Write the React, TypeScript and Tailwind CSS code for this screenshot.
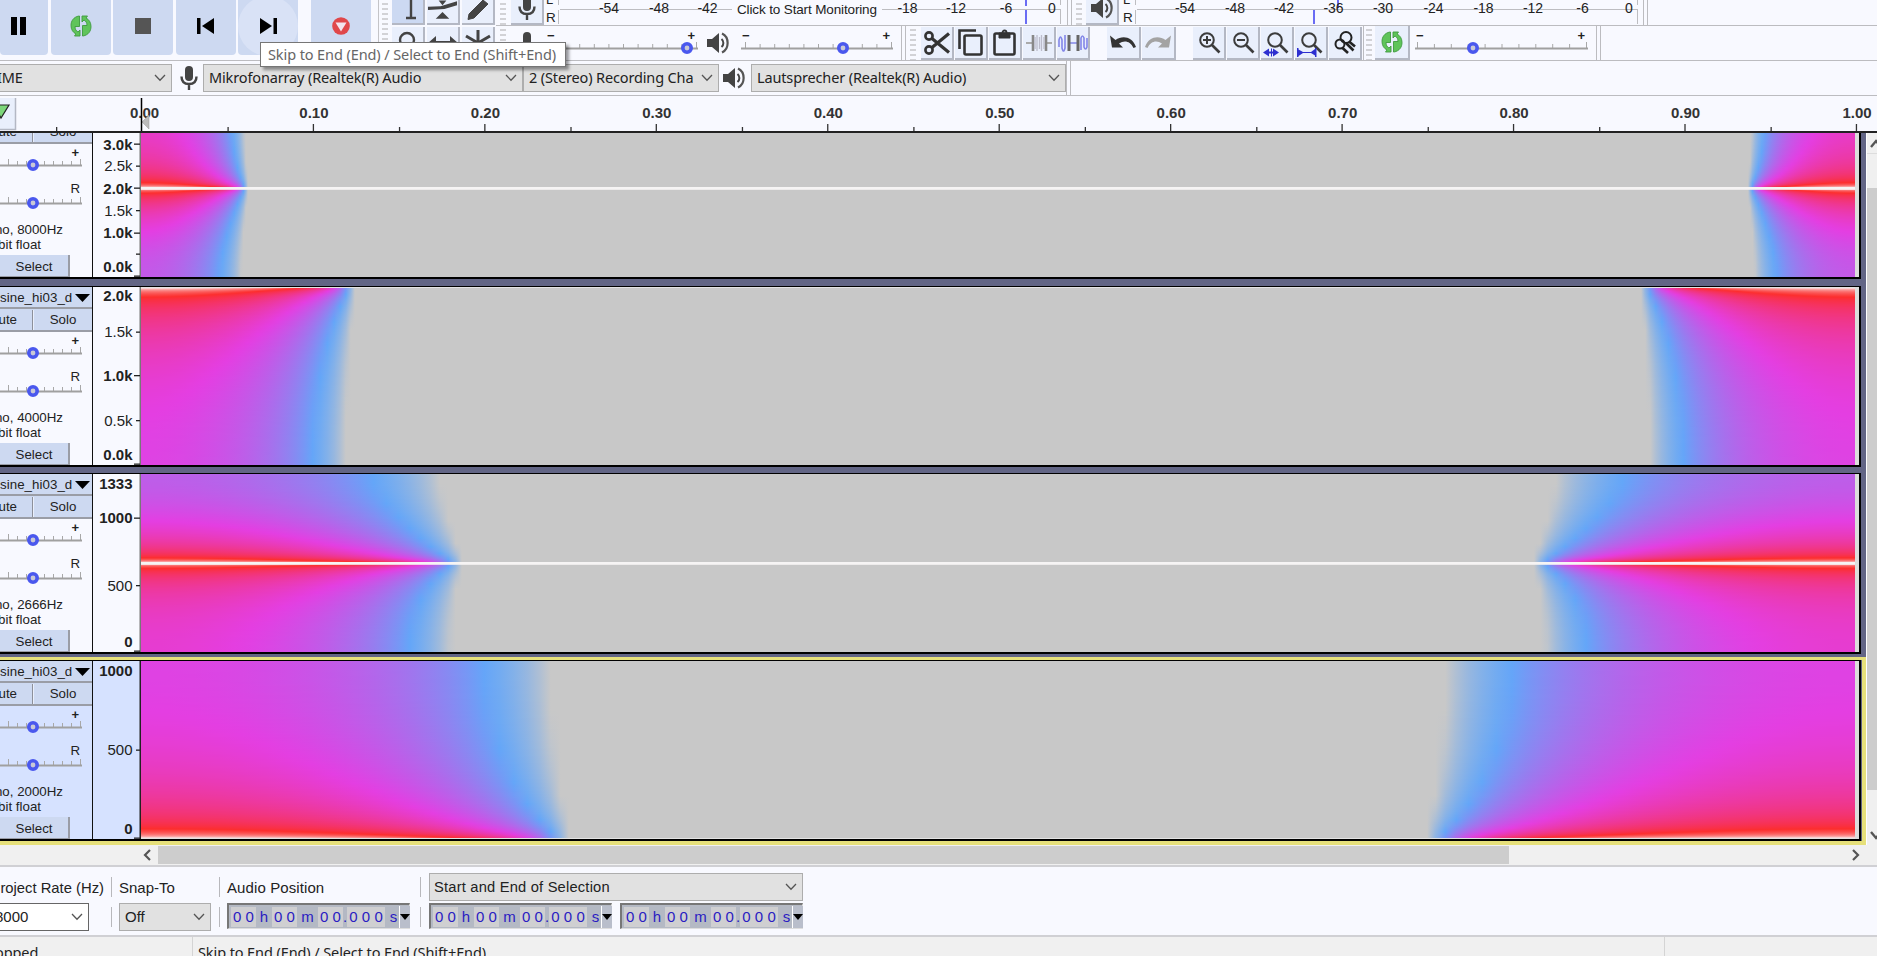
import React from "react";

/* ---------- spectrogram ---------- */

const PALETTE = [
  [200, 200, 200],
  [100, 166, 248],
  [228, 62, 226],
  [252, 46, 46],
  [248, 244, 244],
];

function levelColor(level: number) {
  const v = Math.max(0, Math.min(3.999, level));
  const i = Math.floor(v);
  const f = v - i;
  const c = PALETTE[i].map((a, k) => Math.round(a + (PALETTE[i + 1][k] - a) * f));
  return `rgb(${c[0]},${c[1]},${c[2]})`;
}

type Tone = "nyquist" | "dc" | "midHigh" | "midLow";

const HALF_WINDOW = 512;
const TIME_SCALE = 1710;
const STOPS = Array.from({ length: 26 }, (_, i) => 1 - Math.pow(1 - i / 25, 1.5));

/* Leakage of a sine that is cut off at a distance u (0..1) from the window's centre. */
function leakLevel(tone: Tone, w: number, u: number) {
  let s: number;
  if (tone === "nyquist") s = 1 / (2 * Math.abs(Math.cos(w / 2)) + 1e-6);
  else if (tone === "dc") s = 1 / (2 * Math.abs(Math.sin(w / 2)) + 1e-6);
  else {
    const n = tone === "midHigh" ? 1.1 - 0.72 * Math.cos(w) : 1.1 + 0.8 * Math.cos(w);
    s = Math.sqrt(n) / (2 * Math.abs(Math.cos(w)) + 1e-6);
  }
  const win = 0.5 * (1 + Math.cos(Math.PI * u)) + 1e-9;
  const area = HALF_WINDOW * 0.35 * (1 - u - Math.sin(Math.PI * u) / Math.PI) + 1e-9;
  const mag = 1 / Math.hypot(1 / (win * s), 1 / area);
  return 2.26 + Math.log10(mag);
}

function Spectrogram({ id, rate, tone, rows }: { id: string; rate: number; tone: Tone; rows: number }) {
  const full = 178;
  const reach = (HALF_WINDOW / rate) * TIME_SCALE;
  const first = full - rows;
  const mid = tone === "midHigh" || tone === "midLow";
  const list = Array.from({ length: rows }, (_, r) => r);
  const line = full / 2 - first;
  return (
    <svg width={1714} height={rows} viewBox={`0 0 1714 ${rows}`} className="block shrink-0" shapeRendering="crispEdges">
      <rect width={1714} height={rows} fill="#c8c8c8" />
      <defs>
        {list.map((r) => {
          const w = Math.PI * (1 - (r + first + 0.5) / full);
          return (
            <linearGradient key={r} id={`${id}-${r}`}>
              {STOPS.map((u) => (
                <stop key={u} offset={u} stopColor={levelColor(leakLevel(tone, w, u))} />
              ))}
            </linearGradient>
          );
        })}
        <g id={`${id}-side`}>
          {list.map((r) => (
            <rect key={r} y={r} width={reach} height={1} fill={`url(#${id}-${r})`} />
          ))}
        </g>
      </defs>
      <use href={`#${id}-side`} />
      <use href={`#${id}-side`} transform="translate(1714 0) scale(-1 1)" />
      {mid && <rect y={line - 1} width={1714} height={2} fill="#f6f4f4" />}
      {mid && <rect y={line + 1} width={1714} height={1} fill="#f6f4f4" opacity={0.8} />}
      {tone === "nyquist" && <rect width={1714} height={1} fill="#e4e4e4" />}
      {tone === "dc" && <rect y={rows - 1} width={1714} height={1} fill="#e4e4e4" />}
    </svg>
  );
}

/* ---------- small drawings ---------- */

function Mic({ className = "" }) {
  return (
    <svg width={20} height={26} viewBox="0 0 20 26" className={className}>
      <rect x={6} y={1} width={8} height={15} rx={4} fill="#444" />
      <path d="M2.5 11.5c0 5 3 7.5 7.5 7.5s7.5-2.500 7.500-7.500M10 19v6" fill="none" stroke="#444" strokeWidth={2.400} />
    </svg>
  );
}

function Speaker({ className = "" }) {
  return (
    <svg width={24} height={24} viewBox="0 0 24 24" className={className}>
      <path d="M1 8h5l7-6v20l-7-6H1z" fill="#444" />
      <path d="M15.500 8c2.500 2 2.500 6 0 8" fill="none" stroke="#444" strokeWidth={2} />
      <path d="M16 2.500c7.500 3.500 7.500 15.500 0 19" fill="none" stroke="#555" strokeWidth={2.200} />
    </svg>
  );
}

function Loop() {
  return (
    <svg width={22} height={22} viewBox="0 0 22 22">
      <path d="M9 1C3.500 2 1 6 1 10.500c0 4 2 7 5 8.500l-1.500 2H10v-6l-2 2c-2-1-3-3-3-5.500h4.500V1z" fill="#5fc45a" stroke="#3e9a3e" strokeWidth={0.900} />
      <path d="M13 21c5.500-1 8-5 8-9.500 0-4-2-7-5-8.500l1.500-2H12v6l2-2c2 1 3 3 3 5.500h-4.500V21z" fill="#5fc45a" stroke="#3e9a3e" strokeWidth={0.900} />
    </svg>
  );
}

function Chevron({ className = "" }) {
  return (
    <svg width={12} height={8} viewBox="0 0 12 8" className={className}>
      <path d="M1 1l5 5.200L11 1" fill="none" stroke="#555" strokeWidth={1.300} />
    </svg>
  );
}

function Grip({ className = "" }) {
  return (
    <div className={"flex h-full w-[6px] shrink-0 flex-col justify-start gap-[3px] overflow-hidden pt-[3px] " + className}>
      {Array.from({ length: 12 }, (_, i) => (
        <div key={i} className="h-[2px] w-full shrink-0 bg-[#d2d2d6]" />
      ))}
    </div>
  );
}

function Bars() {
  return <div className="h-full w-[5px] shrink-0 border-x border-[#bcbcc0]" />;
}

function Btn({ children, w = 33, down = false }: { children?: React.ReactNode; w?: number; down?: boolean }) {
  return (
    <div
      className={
        "flex h-full shrink-0 items-center justify-center overflow-hidden border-r-2 border-b-2 border-[#b4b8c4] " +
        (down ? "bg-[#ccd9f2]" : "bg-[#e9effc]")
      }
      style={{ width: w }}
    >
      {children}
    </div>
  );
}

function Slider({ w, knob, step = 14.6, track = "#a0a0a0" }: { w: number; knob: number; step?: number; track?: string }) {
  const n = Math.floor((w - 3) / step + 0.01);
  return (
    <svg width={w} height={14} viewBox={`0 0 ${w} 14`} className="block overflow-visible">
      {Array.from({ length: n + 1 }, (_, i) => {
        const edge = i === 0 || i === n;
        return <rect key={i} x={w - 2 - i * step} y={edge ? 1 : 3} width={1} height={edge ? 6 : 4} fill="#a8a8a8" />;
      })}
      <rect y={6.500} width={w} height={2} fill={track} />
      <circle cx={knob} cy={7} r={4.200} fill="#c9c9d6" stroke="#4a58ee" strokeWidth={3.600} />
    </svg>
  );
}

function VolumeSlider({ w, knob, step }: { w: number; knob: number; step: number }) {
  return (
    <div className="flex h-full shrink-0 flex-col pt-[3px]" style={{ width: w }}>
      <div className="flex h-[12px] justify-between px-px pr-[3px] font-['Liberation_Sans',sans-serif] text-[13px] leading-[14px] font-bold text-[#222]">
        <span>−</span>
        <span>+</span>
      </div>
      <Slider w={w} knob={knob} step={step} />
    </div>
  );
}

function Meter({ w, labels, peaks, note }: { w: number; labels: [string, number][]; peaks: [number, number, number][]; note?: boolean }) {
  return (
    <svg width={w} height={25} viewBox={`0 0 ${w} 25`} className="block shrink-0 font-['Liberation_Sans',sans-serif]">
      <text x={0} y={3.500} fontSize={13} fill="#222">L</text>
      <text x={0} y={21.500} fontSize={13.500} fill="#222">R</text>
      <path d={`M12.500 0v5M12.500 10v14M14 9.500h${w - 16}M${w - 2.500} 0v5M${w - 2.500} 10v14`} stroke="#bdbdc1" fill="none" />
      {peaks.map(([x, y, h]) => (
        <rect key={`${x}-${y}`} x={x} y={y} width={2} height={h} fill="#6a6cf4" />
      ))}
      {labels.map(([t, x]) => (
        <text key={t} x={x} y={12.500} fontSize={14} textAnchor="middle" fill="#222">{t}</text>
      ))}
      {note && <rect x={186} y={0} width={150} height={24} fill="#f8f9ff" />}
      {note && <text x={191} y={14} fontSize={13.500} textLength={140} fill="#222">Click to Start Monitoring</text>}
    </svg>
  );
}

function Select({ children, w, pad = "pl-[5px]", cls = "" }: { children: React.ReactNode; w: number; pad?: string; cls?: string }) {
  return (
    <div className={`flex shrink-0 items-center overflow-hidden border border-[#adadad] bg-[#e1e1e1] ${pad} ${cls}`} style={{ width: w }}>
      <span className="min-w-0 flex-1 overflow-hidden whitespace-nowrap">{children}</span>
      <Chevron className="mr-[5px] ml-2 shrink-0" />
    </div>
  );
}

/* ---------- top toolbars ---------- */

function Transport() {
  const btn = "flex h-[55px] shrink-0 items-center justify-center rounded-b-[4px] bg-[#cdd9f1] pb-[4px]";
  return (
    <div className="flex h-[60px] w-[379px] shrink-0 border-r border-[#c4c4c8]">
      <div className={btn + " w-[48px] pr-[12px]"}>
        <svg width={15} height={18} viewBox="0 0 15 18"><path d="M0 0h6v18H0zM9 0h6v18H9z" /></svg>
      </div>
      <div className={btn + " ml-[3px] w-[60px]"}><Loop /></div>
      <div className={btn + " ml-[2px] w-[60px]"}><div className="h-4 w-4 bg-[#555]" /></div>
      <div className={btn + " ml-[3px] w-[60px] pr-[2px]"}>
        <svg width={17} height={16} viewBox="0 0 17 16"><path d="M0 0h3.500v16H0zM17 0v16L5 8z" /></svg>
      </div>
      <div className={btn + " ml-[2px] w-[60px] overflow-hidden"}>
        <div className="flex h-[60px] w-[60px] shrink-0 items-center justify-center rounded-full bg-[#d9e2f6]">
          <svg width={17} height={16} viewBox="0 0 17 16"><path d="M17 0h-3.500v16H17zM0 0v16l12-8z" /></svg>
        </div>
      </div>
      <div className={btn + " ml-[13px] w-[60px]"}>
        <svg width={18} height={18} viewBox="0 0 18 18">
          <circle cx={9} cy={9} r={8.800} fill="#e0474a" />
          <path d="M3.500 5.500h11L9 14.500z" fill="#f3e4ee" />
        </svg>
      </div>
    </div>
  );
}

function Lens({ sign, extra }: { sign?: React.ReactNode; extra?: React.ReactNode }) {
  return (
    <svg width={28} height={28} viewBox="0 0 28 28">
      <circle cx={12} cy={11} r={6.800} fill="none" stroke="#3c3c3c" strokeWidth={2} />
      <path d="M17 16l7.500 7.500" stroke="#3c3c3c" strokeWidth={2.600} />
      {sign}
      {extra}
    </svg>
  );
}

function TopBars() {
  return (
    <div className="box-content flex h-[60px] border-b border-[#bcbcc0]">
      <Transport />
      <div className="flex min-w-0 flex-1">
        <div className="flex w-[117px] shrink-0 pl-[3px]">
          <Grip className="mr-[4px]" />
          <div className="flex flex-col gap-[2px]">
            <div className="flex h-[25px] gap-[2px]">
              <Btn down>
                <svg width={14} height={24} viewBox="0 0 14 24" className="translate-x-[3px]"><path d="M2 18h10M7 0v18" stroke="#444" strokeWidth={2.400} /></svg>
              </Btn>
              <Btn>
                <svg width={32} height={24} viewBox="0 0 32 24"><path d="M1 6.500l13-.5 17-5v4L18 9l-17 1z" fill="#444" /><path d="M16 12l7 7H9zM12 0h8l-4 5z" fill="#444" /></svg>
              </Btn>
              <Btn>
                <svg width={28} height={24} viewBox="0 0 28 24"><path d="M5 14L19 0l5 4-14 14-6 1.500z" fill="#444" stroke="#444" /></svg>
              </Btn>
            </div>
            <div className="flex h-[33px] gap-[2px]">
              <Btn><svg width={26} height={28} viewBox="0 0 26 28"><circle cx={12} cy={11} r={7} fill="none" stroke="#444" strokeWidth={2.400} /><path d="M17 17l7 8" stroke="#444" strokeWidth={3} /></svg></Btn>
              <Btn><svg width={30} height={20} viewBox="0 0 30 20"><path d="M0 10l8-7v5h14V3l8 7-8 7v-5H8v5z" fill="#444" /></svg></Btn>
              <Btn><svg width={28} height={28} viewBox="0 0 28 28"><path d="M14 1v26M2 7l24 14M26 7L2 21" stroke="#444" strokeWidth={3} /></svg></Btn>
            </div>
          </div>
        </div>
        <div className="flex min-w-0 flex-1 flex-col">
          {/* meters */}
          <div className="flex h-[26px] border-b border-[#bcbcc0]">
            <Grip className="mr-[5px] ml-[4px]" />
            <Btn><Mic className="-translate-y-[4px]" /></Btn>
            <div className="ml-[2px] flex">
              <Meter
                w={517}
                note
                labels={[["-54", 63], ["-48", 113], ["-42", 161.5], ["-18", 361.5], ["-12", 410], ["-6", 460], ["0", 506]]}
                peaks={[[479, 0, 6], [479, 10, 14]]}
              />
            </div>
            <div className="ml-[4px] flex"><Bars /></div>
            <Grip className="mr-[4px] ml-[4px]" />
            <Btn><Speaker className="-translate-y-[4px]" /></Btn>
            <div className="ml-[4px] flex">
              <Meter
                w={517}
                labels={[["-54", 62], ["-48", 112], ["-42", 161], ["-36", 210.500], ["-30", 260], ["-24", 310.500], ["-18", 360.500], ["-12", 410], ["-6", 459.500], ["0", 506]]}
                peaks={[[190, 10, 14], [214, 0, 8]]}
              />
            </div>
            <div className="ml-[3px] flex"><Bars /></div>
          </div>
          {/* mixer, edit, play speed */}
          <div className="flex h-[34px]">
            <Grip className="mr-[11px] ml-[4px]" />
            <Mic className="mt-[5px] shrink-0" />
            <div className="ml-[9px] flex"><VolumeSlider w={152} knob={141} step={14.600} /></div>
            <Speaker className="mt-[5px] ml-[8px] shrink-0" />
            <div className="ml-[11px] flex"><VolumeSlider w={152} knob={102} step={14.600} /></div>
            <div className="ml-[8px] flex"><Bars /></div>
            <Grip className="mr-[5px] ml-[4px]" />
            <div className="flex gap-px pt-px">
              <Btn>
                <svg width={28} height={28} viewBox="0 0 28 28" fill="none" stroke="#333">
                  <circle cx={6} cy={7} r={3.600} strokeWidth={2.600} /><circle cx={6} cy={21} r={3.600} strokeWidth={2.600} />
                  <path d="M9 9.500l17 14M9 18.500l17-14" strokeWidth={3.200} />
                </svg>
              </Btn>
              <Btn>
                <svg width={28} height={28} viewBox="0 0 28 28" fill="none" stroke="#333" strokeWidth={2.600}>
                  <rect x={7.500} y={6.500} width={17} height={19} rx={1.500} /><path d="M2.500 20V1.500H19" />
                </svg>
              </Btn>
              <Btn>
                <svg width={28} height={28} viewBox="0 0 28 28" fill="none" stroke="#333" strokeWidth={2.600}>
                  <rect x={3.500} y={4.500} width={20} height={21} rx={1.500} /><path d="M8 4h11v5H8z" fill="#333" strokeWidth={1} /><circle cx={13.500} cy={3.500} r={2} strokeWidth={1.800} />
                </svg>
              </Btn>
              <Btn>
                <svg width={28} height={22} viewBox="0 0 28 22" fill="none">
                  <path d="M1 11h6M22 11h5" stroke="#aaa" strokeWidth={2} /><path d="M8 3v16M21 3v16" stroke="#888" strokeWidth={2.600} />
                  <path d="M10 5v12M12 3v16M14.500 5v12M16.500 3v16M19 5v12" stroke="#bcbccb" strokeWidth={1.300} />
                </svg>
              </Btn>
              <Btn>
                <svg width={30} height={22} viewBox="0 0 30 22" fill="none">
                  <path d="M1 15V8q1.500-6 3 0v8q1.500 6 3 0V3M23 18V6q1.500-4 3 0v9q1.500 4 3 0V6M12 11h9" stroke="#8286e8" strokeWidth={1.600} />
                  <path d="M11 3v16M20 3v16" stroke="#666" strokeWidth={3} />
                </svg>
              </Btn>
            </div>
            <div className="ml-[17px] flex gap-px pt-px">
              <Btn w={34}>
                <svg width={28} height={18} viewBox="0 0 28 18"><path d="M1 1.500l2 12h11L10 9.500c5-3.500 11-3 14.500 4.500l2.500-1C23 2 13 1.500 6.500 6z" fill="#333" /></svg>
              </Btn>
              <Btn w={34}>
                <svg width={28} height={18} viewBox="0 0 28 18"><path d="M27 1.500l-2 12H14l4-4C13 6 7 6.500 3.500 14L1 13C5 2 15 1.500 21.500 6z" fill="#a3a3a3" /></svg>
              </Btn>
            </div>
            <div className="ml-[17px] flex gap-px pt-px">
              <Btn><Lens sign={<path d="M8 11h8M12 7v8" stroke="#3c3c3c" strokeWidth={2} />} /></Btn>
              <Btn><Lens sign={<path d="M8 11h8" stroke="#3c3c3c" strokeWidth={2} />} /></Btn>
              <Btn><Lens extra={<path d="M0 23.500l6-4v3h2v-3l1 0v3h1v-3l6 4-6 4v-3H9v3H8v-3H6v3z" fill="#2d2fd0" />} /></Btn>
              <Btn><Lens extra={<path d="M0 19h1.500v1.500L6 23h8l4-3V19h1.500v9H18v-1.500L14 24H6l-4.500 3V28H0z" fill="#2d2fd0" />} /></Btn>
              <Btn>
                <svg width={28} height={28} viewBox="0 0 28 28" fill="none" stroke="#222" strokeWidth={2}>
                  <circle cx={15} cy={8.500} r={5.500} /><circle cx={9} cy={15} r={4.500} /><path d="M18 12.500l6 5M11 18.500l6 5.500M15 14l7.500 7.500" strokeWidth={2.600} />
                </svg>
              </Btn>
            </div>
            <div className="mr-[2px] ml-px w-px bg-[#bcbcc0]" />
            <Grip className="mr-[3px]" />
            <Btn w={35}><Loop /></Btn>
            <div className="ml-[5px] flex"><VolumeSlider w={173} knob={58} step={16.900} /></div>
            <div className="ml-[8px] flex"><Bars /></div>
          </div>
        </div>
      </div>
    </div>
  );
}

function DeviceBar() {
  return (
    <div className="flex h-[35px] items-center border-b border-[#bcbcc0] font-['Noto_Sans',sans-serif] text-[14.500px] tracking-[-0.140px] text-[#222]">
      <Select w={173} pad="pl-0" cls="h-[28px] -ml-px"><span className="-ml-[3px]">IME</span></Select>
      <Mic className="mr-[4px] ml-[7px] shrink-0" />
      <Select w={320} cls="h-[28px]">Mikrofonarray (Realtek(R) Audio</Select>
      <Select w={196} cls="h-[28px]">2 (Stereo) Recording Channels</Select>
      <Speaker className="mr-[5px] ml-[3px] shrink-0" />
      <Select w={315} cls="h-[28px]">Lautsprecher (Realtek(R) Audio)</Select>
      <div className="h-[34px]"><Bars /></div>
    </div>
  );
}

function TimeRuler() {
  const marks = Array.from({ length: 11 }, (_, i) => i);
  return (
    <div className="flex h-[37px] border-b-2 border-[#222]">
      <svg width={1877} height={35} viewBox="0 0 1877 35" className="block font-['Liberation_Sans',sans-serif]">
        <path d="M0 2h15v31H0z" fill="#e9effc" />
        <path d="M15.500 2v31.500H0" fill="none" stroke="#b4b8c4" strokeWidth={1.500} />
        <path d="M-6 9h15L1 22z" fill="#7cd67a" stroke="#222" strokeWidth={1.200} />
        {marks.map((i) => (
          <g key={i} fill="#333">
            {i > 0 && <rect x={141.300 + i * 171.450} y={28} width={1.300} height={7} />}
            <rect x={56 + i * 171.450} y={31} width={1.300} height={4} />
            <text x={(i ? 142.500 : 144.500) + i * 171.450} y={22} fontSize={15} fontWeight={700} textAnchor="middle">{(i / 10).toFixed(2)}</text>
          </g>
        ))}
        <path d="M149 19v14l-7-7z" fill="#bbb" stroke="#999" strokeWidth={0.500} />
        <path d="M141.500 2v33" stroke="#000" strokeWidth={1.500} />
      </svg>
    </div>
  );
}

/* ---------- tracks ---------- */

type Tick = [string, number, number, boolean];

interface TrackData {
  id: string;
  rate: number;
  tone: Tone;
  rows: number;
  ticks: Tick[];
  selected?: boolean;
}

/* label, label centre, tick position, bold */
const TRACKS: TrackData[] = [
  {
    id: "a", rate: 8000, tone: "midHigh", rows: 144,
    ticks: [["3.0k", 11.500, 11, true], ["2.5k", 33, 33, false], ["2.0k", 55.500, 55, true], ["1.5k", 78, 77.500, false], ["1.0k", 100, 100, true], ["", 0, 121, false], ["0.0k", 134, 143, true]],
  },
  {
    id: "b", rate: 4000, tone: "nyquist", rows: 178,
    ticks: [["2.0k", 9, -5, true], ["1.5k", 45, 45, false], ["1.0k", 88.500, 88.500, true], ["0.5k", 133.500, 133.500, false], ["0.0k", 168, 177, true]],
  },
  {
    id: "c", rate: 2666, tone: "midLow", rows: 178,
    ticks: [["1333", 9.500, -5, true], ["1000", 44, 44, true], ["500", 111.500, 111.500, false], ["0", 168, 177, true]],
  },
  {
    id: "d", rate: 2000, tone: "dc", rows: 178, selected: true,
    ticks: [["1000", 9.500, -5, true], ["500", 89, 89, false], ["0", 168, 177, true]],
  },
];

function TrackPanel({ rate, clipped, selected }: { rate: number; clipped?: boolean; selected?: boolean }) {
  return (
    <div
      className={
        "flex h-full w-[93px] shrink-0 flex-col overflow-hidden border-r border-[#111] font-['Liberation_Sans',sans-serif] text-[13.300px] text-[#222] " +
        (clipped ? "justify-end " : "") +
        (selected ? "bg-[#d6e2ff]" : "bg-[#f8f9ff]")
      }
    >
      <div className="flex h-[178px] shrink-0 flex-col">
        <div className="flex h-[22px] shrink-0 items-center justify-between border-b-2 border-[#9a9da6] bg-[#cdd9f1] pt-[2px] pr-[1px]">
          <span className="tracking-[0.050px]">sine_hi03_d</span>
          <svg width={15} height={8} viewBox="0 0 15 8" className="mr-px"><path d="M0 0h15L7.500 8z" /></svg>
        </div>
        <div className="flex h-[23px] shrink-0 border-b-2 border-[#9a9da6] bg-[#cdd9f1] pt-px">
          <div className="flex w-[33px] items-center justify-end border-r border-[#8d909a] pr-[15px]"><span>Mute</span></div>
          <div className="flex flex-1 items-center justify-center border-l border-[#e9effc]">Solo</div>
        </div>
        <div className="flex h-[14px] shrink-0 items-end justify-end pr-[13px] text-[13px] leading-[10px] font-bold">+</div>
        <div className="h-[14px] shrink-0"><Slider w={82} knob={33} step={9} /></div>
        <div className="flex h-[24px] shrink-0 items-end justify-end pr-[12px] leading-[14px]">R</div>
        <div className="h-[14px] shrink-0"><Slider w={82} knob={33} step={9} /></div>
        <div className="mt-[12px] flex w-[63px] shrink-0 justify-end leading-[15px] whitespace-nowrap">Mono, {rate}Hz</div>
        <div className="flex w-[41px] shrink-0 justify-end leading-[15px] whitespace-nowrap">32-bit float</div>
        <div className="mt-auto flex h-[22px] w-[70px] shrink-0 items-center justify-center border-r-2 border-b border-[#9a9da6] bg-[#cdd9f1] pt-[2px]">Select</div>
      </div>
    </div>
  );
}

function FrequencyRuler({ ticks, rows, selected }: { ticks: Tick[]; rows: number; selected?: boolean }) {
  return (
    <svg width={48} height={rows} viewBox={`0 0 48 ${rows}`} className={"block shrink-0 font-['Liberation_Sans',sans-serif] " + (selected ? "bg-[#d6e2ff]" : "bg-[#f8f9ff]")}>
      <rect x={46.500} width={1.500} height={rows} fill={selected ? "#222" : "#777"} />
      {ticks.map(([label, cy, ty, bold], i) => (
        <g key={i} fill="#222">
          <rect x={bold ? 41 : 43} y={ty - 0.500} width={bold ? 6 : 4} height={1.300} />
          <text x={39.500} y={cy + 5} fontSize={15} fontWeight={bold ? 700 : 400} textAnchor="end">{label}</text>
        </g>
      ))}
    </svg>
  );
}

function TrackRow({ t }: { t: TrackData }) {
  const clipped = t.rows < 178;
  return (
    <div className={"w-[1861px] border-black " + (clipped ? "border-b-2" : "border-t border-b-2")}>
      <div className="flex w-[1861px] border-r-[2px] border-black" style={{ height: t.rows }}>
        <TrackPanel rate={t.rate} clipped={clipped} selected={t.selected} />
        <FrequencyRuler ticks={t.ticks} rows={t.rows} selected={t.selected} />
        <Spectrogram id={t.id} rate={t.rate} tone={t.tone} rows={t.rows} />
        <div className="h-full min-w-0 flex-1 bg-[#dcdedc]" />
      </div>
    </div>
  );
}

function Tracks() {
  return (
    <div className="flex h-[713px]">
      <div className="flex w-[1866px] shrink-0 flex-col bg-[#626585]">
        <TrackRow t={TRACKS[0]} />
        <div className="h-[7px] shrink-0" />
        <TrackRow t={TRACKS[1]} />
        <div className="h-[6px] shrink-0" />
        <TrackRow t={TRACKS[2]} />
        <div className="h-[3px] shrink-0" />
        <div className="flex flex-1 flex-col border-t-[3px] border-r-[4px] border-b-[4px] border-[#e6e07a]">
          <TrackRow t={TRACKS[3]} />
        </div>
      </div>
      <div className="flex flex-1 flex-col overflow-hidden border-l border-white bg-[#f0f0f0]">
        <svg width={14} height={20} viewBox="0 0 14 20" className="shrink-0"><path d="M4 14l5-6 5 6" fill="none" stroke="#555" strokeWidth={2.400} /></svg>
        <div className="h-px shrink-0 bg-[#ddd]" />
        <div className="mt-[34px] h-[602px] shrink-0 bg-[#cdcdcd]" />
        <svg width={14} height={54} viewBox="0 0 14 54" className="shrink-0"><path d="M4 42l5 6 5-6" fill="none" stroke="#555" strokeWidth={2.400} /></svg>
      </div>
    </div>
  );
}

/* ---------- bottom ---------- */

const GROUPS: [string[], string][] = [
  [["0", "0"], "w-[25px] bg-[#cfcfd1]"],
  [["h"], "w-[16px]"],
  [["0", "0"], "w-[25px] bg-[#cfcfd1]"],
  [["m"], "w-[21px]"],
  [["0", "0"], "w-[25px] bg-[#cfcfd1]"],
  [["."], "w-[4px]"],
  [["0", "0", "0"], "w-[38px] bg-[#cfcfd1]"],
  [["s"], "w-[14px] pl-[3px]"],
];

function TimeField() {
  return (
    <div className="flex h-[26px] w-[183px] shrink-0 items-center border-t-2 border-r border-b border-l-2 border-t-[#777] border-r-[#ddd] border-b-[#ddd] border-l-[#777] bg-[#b4b9c4] pl-[2px] font-['Liberation_Sans',sans-serif] text-[15px] text-[#2a1cc2]">
      {GROUPS.map(([chars, cls], i) => (
        <div key={i} className={"flex h-[20px] shrink-0 items-center justify-around leading-none " + cls}>
          {chars.map((c, k) => (
            <span key={k}>{c}</span>
          ))}
        </div>
      ))}
      <div className="flex h-[22px] flex-1 items-center justify-center border-l border-white bg-[#b9becb]">
        <svg width={10} height={6} viewBox="0 0 10 6" className="shrink-0"><path d="M0 0h10L5 6z" /></svg>
      </div>
    </div>
  );
}

function Divider({ className = "" }) {
  return (
    <div className={"flex w-px shrink-0 flex-col gap-[10px] " + className}>
      <div className="h-[20px] bg-[#b8b8bc]" />
      <div className="h-[20px] bg-[#b8b8bc]" />
    </div>
  );
}

function SelectionBar() {
  return (
    <div className="flex h-[72px] shrink-0 border-y-2 border-[#d0d0d4] pt-[6px] font-['Liberation_Sans',sans-serif] text-[15px] text-[#222]">
      <div className="flex w-[111px] shrink-0 flex-col overflow-hidden">
        <div className="flex h-[30px] w-[104px] items-center justify-end text-[14.800px] whitespace-nowrap">Project Rate (Hz)</div>
        <div className="flex h-[28px] w-[89px] items-center justify-between border border-l-0 border-[#666] bg-white pr-[5px]">
          <span className="-ml-[5px]">8000</span>
          <Chevron />
        </div>
      </div>
      <Divider className="mt-[4px]" />
      <div className="ml-[7px] flex w-[100px] shrink-0 flex-col">
        <div className="flex h-[30px] items-center">Snap-To</div>
        <Select w={92} cls="h-[28px]">Off</Select>
      </div>
      <Divider className="mt-[4px]" />
      <div className="ml-[7px] flex w-[193px] shrink-0 flex-col">
        <div className="flex h-[30px] items-center tracking-[0.100px]">Audio Position</div>
        <TimeField />
      </div>
      <Divider className="mt-[4px]" />
      <div className="ml-[8px] flex flex-col">
        <Select w={374} pad="pl-[4px]" cls="h-[28px] mb-[2px] text-[14.700px] tracking-[0.200px]">Start and End of Selection</Select>
        <div className="flex gap-[8px]">
          <TimeField />
          <TimeField />
        </div>
      </div>
    </div>
  );
}

export default function App() {
  return (
    <div className="relative flex h-[956px] w-[1877px] flex-col overflow-hidden bg-[#f8f9ff]">
      <TopBars />
      <DeviceBar />
      <TimeRuler />
      <Tracks />
      <div className="flex h-[20px] shrink-0 items-center bg-[#f0f0f0]">
        <svg width={10} height={14} viewBox="0 0 10 14" className="ml-[142px] shrink-0"><path d="M8 2L3 7l5 5" fill="none" stroke="#555" strokeWidth={2.200} /></svg>
        <div className="ml-[6px] h-[18px] w-[1351px] shrink-0 bg-[#cdcdcd]" />
        <svg width={10} height={14} viewBox="0 0 10 14" className="ml-[342px] shrink-0"><path d="M2 2l5 5-5 5" fill="none" stroke="#555" strokeWidth={2.200} /></svg>
      </div>
      <SelectionBar />
      <div className="flex h-[30px] shrink-0 bg-[#f0f0f0] font-['Noto_Sans',sans-serif] text-[14.500px] leading-[31px] tracking-[-0.100px] whitespace-nowrap text-[#222]">
        <div className="flex w-[42px] shrink-0 justify-end overflow-hidden">Stopped.</div>
        <div className="ml-[150px] h-full w-px bg-[#d4d4d4]" />
        <div className="w-[1471px] pl-[5px]">Skip to End (End) / Select to End (Shift+End)</div>
        <div className="h-full w-px bg-[#d4d4d4]" />
      </div>
      <div className="absolute top-[42px] left-[260px] flex h-[25px] w-[306px] items-center border border-[#767676] bg-white pl-[7px] font-['Noto_Sans',sans-serif] text-[14.500px] tracking-[-0.100px] whitespace-nowrap text-[#666] shadow-[3px_3px_3px_rgba(0,0,0,0.4)]">
        Skip to End (End) / Select to End (Shift+End)
      </div>
    </div>
  );
}
